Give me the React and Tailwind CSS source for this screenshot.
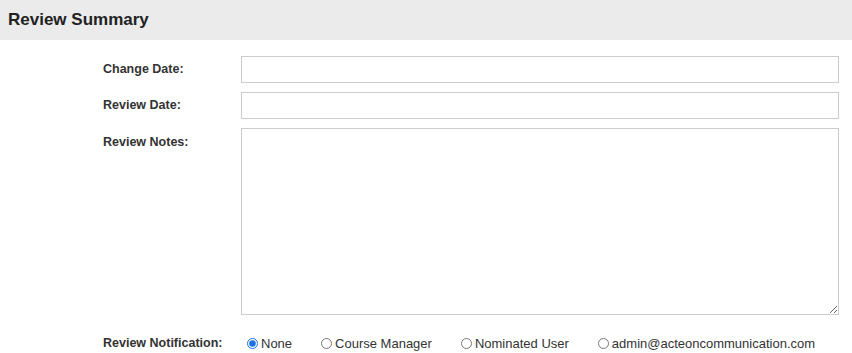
import React from 'react';

const options = ['None', 'Course Manager', 'Nominated User', 'admin@acteoncommunication.com'];

const Row = ({ label, children, top }) => (
  <div className="grid grid-cols-[241px_1fr]">
    <label className={`pl-[103px] text-[12.5px] font-bold text-[#333] ${top ? 'pt-[5px]' : 'self-center'}`}>
      {label}
    </label>
    {children}
  </div>
);

const App = () => {
  return (
    <div className="w-[852px] h-[353px] bg-white font-['Liberation_Sans',Arial,sans-serif] overflow-hidden">
      <div className="h-10 bg-[#ebebeb] flex items-center px-2">
        <h2 className="text-[17px] font-bold text-[#222]">Review Summary</h2>
      </div>

      <div className="flex flex-col gap-[9px] pt-4 pr-[13px]">
        <Row label="Change Date:">
          <input type="text" className="h-[27px] w-full border border-[#cccccc] bg-white outline-none" />
        </Row>
        <Row label="Review Date:">
          <input type="text" className="h-[27px] w-full border border-[#cccccc] bg-white outline-none" />
        </Row>
        <Row label="Review Notes:" top>
          <textarea className="h-[187px] w-full border border-[#cccccc] bg-white outline-none block" />
        </Row>
        <div className="grid grid-cols-[241px_1fr] mt-[10px]">
          <span className="pl-[103px] text-[12.5px] font-bold text-[#333] self-center whitespace-nowrap">Review Notification:</span>
          <div className="flex items-center pl-[6px] whitespace-nowrap">
            {options.map((o, i) => (
              <label key={o} className="flex shrink-0 items-center gap-[3px] mr-[29px] last:mr-0 text-[13px] text-[#333]">
                <input
                  type="radio"
                  name="notify"
                  defaultChecked={i === 0}
                  className="w-[11px] h-[11px] m-0 accent-[#1a73e8]"
                />
                {o}
              </label>
            ))}
          </div>
        </div>
      </div>
    </div>
  );
};

export default App;
